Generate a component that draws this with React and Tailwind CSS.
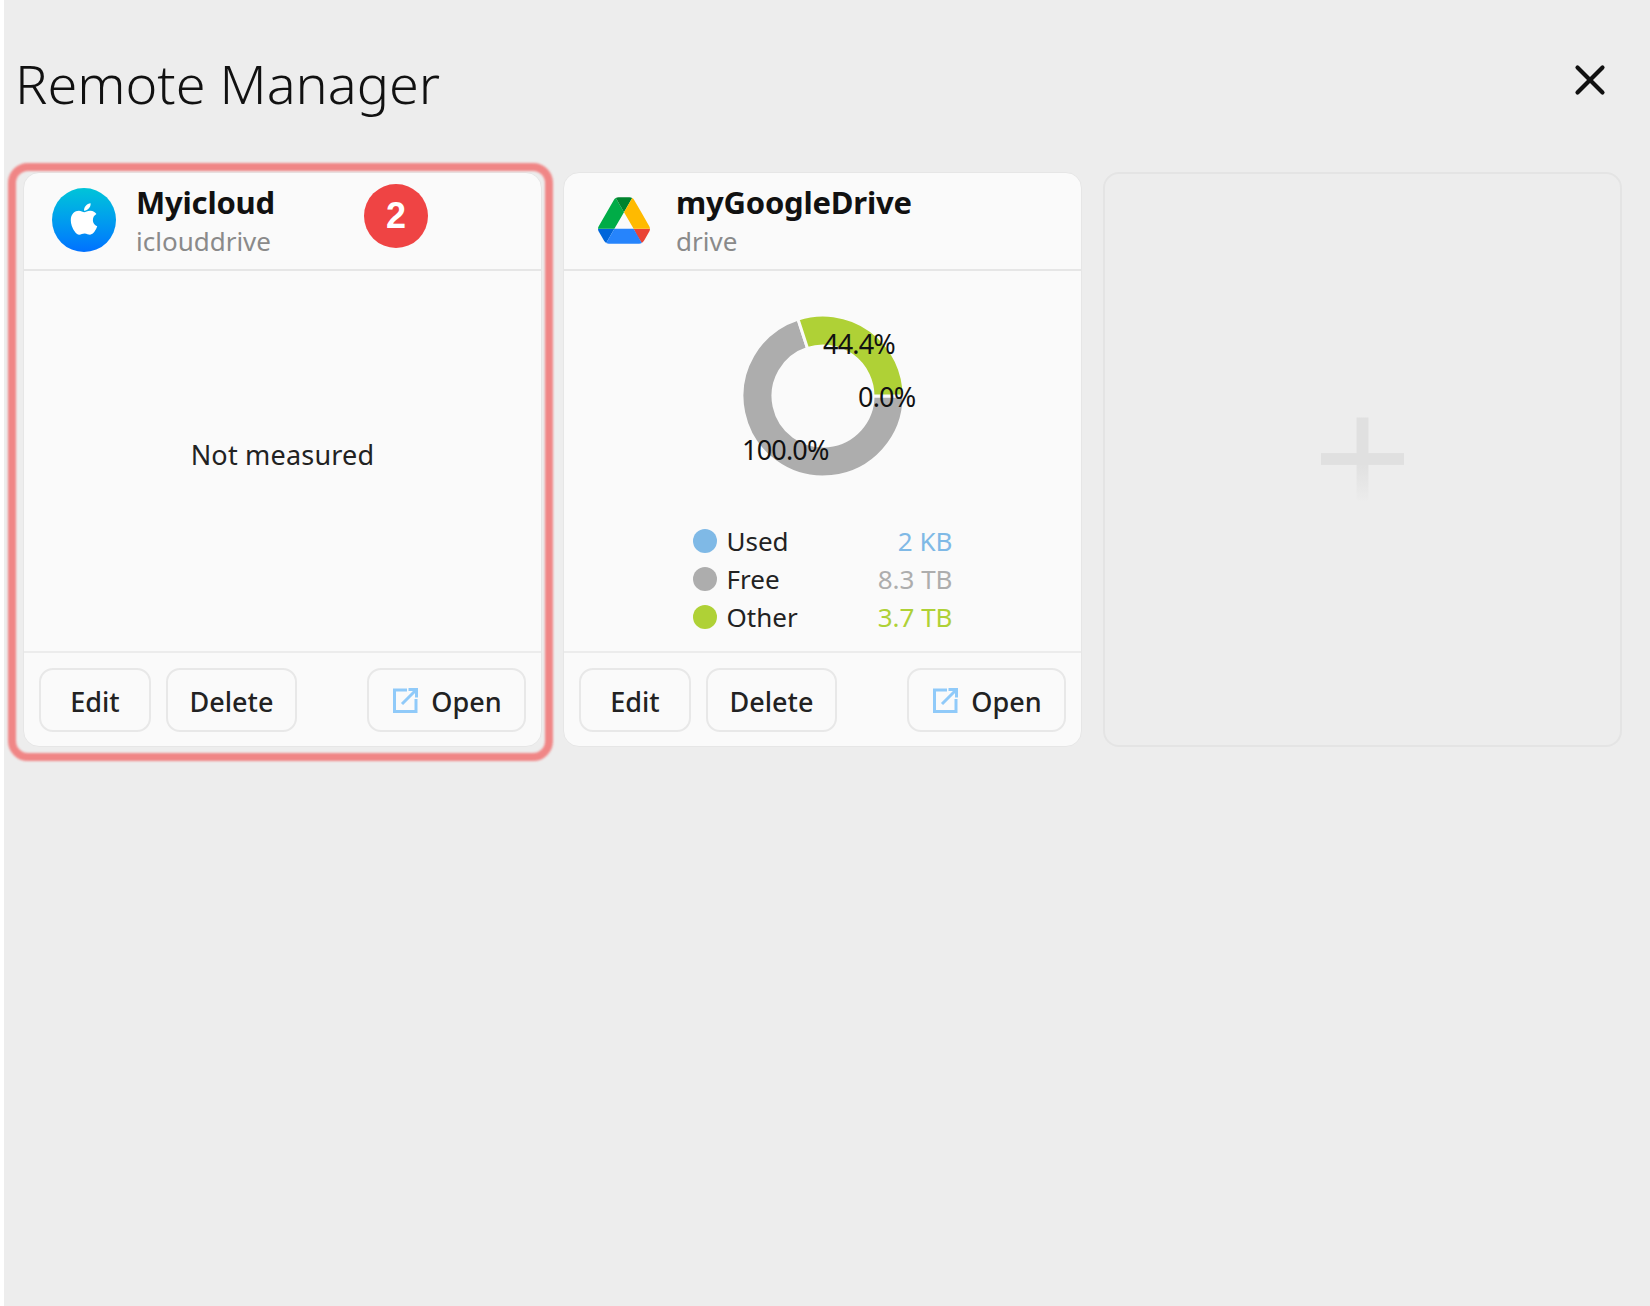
import React from "react";
import { FaApple } from "react-icons/fa";
import { X } from "lucide-react";

const font = "font-['Noto_Sans','Open_Sans',sans-serif]";

const DriveLogo = () => (
  <svg viewBox="0 0 87.3 78" className="w-[52px] h-[47px] ml-[6px]">
    <path d="m6.6 66.85 3.85 6.65c.8 1.4 1.95 2.5 3.3 3.3l13.75-23.8h-27.5c0 1.55.4 3.1 1.2 4.5z" fill="#0066da" />
    <path d="m43.65 25-13.75-23.8c-1.35.8-2.5 1.9-3.3 3.3l-25.4 44a9.06 9.06 0 0 0 -1.2 4.5h27.5z" fill="#00ac47" />
    <path d="m73.55 76.8c1.35-.8 2.5-1.9 3.3-3.3l1.6-2.75 7.65-13.25c.8-1.4 1.2-2.95 1.2-4.5h-27.502l5.852 11.5z" fill="#ea4335" />
    <path d="m43.65 25 13.75-23.8c-1.35-.8-2.9-1.2-4.5-1.2h-18.5c-1.6 0-3.15.45-4.5 1.2z" fill="#00832d" />
    <path d="m59.8 53h-32.3l-13.75 23.8c1.35.8 2.9 1.2 4.5 1.2h50.8c1.6 0 3.15-.45 4.5-1.2z" fill="#2684fc" />
    <path d="m73.4 26.5-12.7-22c-.8-1.4-1.95-2.5-3.3-3.3l-13.75 23.8 16.15 28h27.45c0-1.55-.4-3.1-1.2-4.5z" fill="#ffba00" />
  </svg>
);

const AppleLogo = () => (
  <div className="w-16 h-16 rounded-full bg-gradient-to-b from-[#00c4d8] to-[#0070ff] flex items-center justify-center">
    <FaApple className="text-white w-[36px] h-[36px] -mt-[3px]" />
  </div>
);

const OpenIcon = () => (
  <svg viewBox="0 0 25 25" className="w-[25px] h-[25px] mt-[2px]" fill="none" stroke="#90caf9" strokeWidth="3">
    <path d="M14 2H1.5v21.5H23V11" />
    <path d="M9 16L23 2M15.5 1.5h8v8" />
  </svg>
);

// donut: green from -18deg to 90deg, the rest grey
const Donut = () => {
  const arc = (a1, a2) => {
    const R = 81;
    const r = 50;
    const c = 90;
    const p = (rad, a) => {
      const t = ((a - 90) * Math.PI) / 180;
      return `${c + rad * Math.cos(t)} ${c + rad * Math.sin(t)}`;
    };
    const large = a2 - a1 > 180 ? 1 : 0;
    return `M${p(R, a1)} A${R} ${R} 0 ${large} 1 ${p(R, a2)} L${p(r, a2)} A${r} ${r} 0 ${large} 0 ${p(r, a1)} Z`;
  };
  const label = "fill-[#111] text-[27px] tracking-[-0.8px]";
  return (
    <svg viewBox="-20 0 220 180" className="w-[220px] h-[180px] overflow-visible">
      <path d={arc(90, 342)} fill="#adadad" stroke="#fafafa" strokeWidth="3" />
      <path d={arc(-18, 90)} fill="#afd136" stroke="#fafafa" strokeWidth="3" />
      <text x="90" y="48" className={label}>44.4%</text>
      <text x="125" y="101" className={label}>0.0%</text>
      <text x="9" y="154" className={label}>100.0%</text>
    </svg>
  );
};

const Legend = () => {
  const rows = [
    { name: "Used", value: "2 KB", dot: "bg-[#7fb9e6]", text: "text-[#7fb9e6]" },
    { name: "Free", value: "8.3 TB", dot: "bg-[#adadad]", text: "text-[#adadad]" },
    { name: "Other", value: "3.7 TB", dot: "bg-[#afd136]", text: "text-[#afd136]" },
  ];
  return (
    <div className="w-[260px] flex flex-col mt-[36px]">
      {rows.map((row) => (
        <div key={row.name} className="h-[38px] flex items-center text-[26px]">
          <div className={`w-6 h-6 rounded-full mr-[10px] ${row.dot}`}></div>
          <div className="text-[#222]">{row.name}</div>
          <div className={`ml-auto ${row.text}`}>{row.value}</div>
        </div>
      ))}
    </div>
  );
};

const Card = ({ icon, name, type, children }) => (
  <div className="h-[575px] rounded-[16px] border border-[#e6e6e6] bg-[#fafafa] flex flex-col">
    <div className="h-[98px] shrink-0 border-b-2 border-[#e6e6e6] flex items-center">
      <div className="w-[112px] pl-[28px] pb-[2px] shrink-0 flex justify-start">{icon}</div>
      <div className="flex flex-col">
        <div className="text-[31px] leading-[40px] font-bold text-[#111] tracking-[-0.2px]">{name}</div>
        <div className="text-[26px] leading-[38px] text-[#8a8a8a]">{type}</div>
      </div>
    </div>
    <div className="flex-1 flex flex-col items-center justify-start">{children}</div>
    <div className="h-[95px] shrink-0 border-t-2 border-[#ececec] flex items-center px-[15px] gap-[15px] text-[27px] font-medium text-[#222]">
      <div className="w-[112px] h-[64px] pt-[5px] rounded-[14px] border-2 border-[#e8e8e8] flex items-center justify-center">Edit</div>
      <div className="w-[131px] h-[64px] pt-[5px] rounded-[14px] border-2 border-[#e8e8e8] flex items-center justify-center">Delete</div>
      <div className="ml-auto w-[159px] h-[64px] pl-[2px] rounded-[14px] border-2 border-[#e8e8e8] flex items-center justify-center gap-[13px]">
        <OpenIcon />
        <span className="pt-[5px]">Open</span>
      </div>
    </div>
  </div>
);

export default function App() {
  return (
    <div className={`min-h-[1306px] bg-white pl-1 ${font}`}>
      <div className="min-h-[1306px] bg-[#ededed] pl-[19px] pr-[28px]">
        <div className="h-[172px] flex items-start justify-between">
          <div className="text-[54px] leading-[72px] mt-[47px] -ml-[8px] font-light text-[#111]">Remote Manager</div>
          <X className="mt-[55px] mr-[7px] w-[50px] h-[50px] text-[#111]" strokeWidth={2} />
        </div>
        <div className="grid grid-cols-3 gap-[21px]">
          <div className="relative">
            <Card icon={<AppleLogo />} name="Myicloud" type="iclouddrive">
              <div className="flex-1 flex items-center justify-center text-[27px] tracking-[0.2px] text-[#222] pb-[11px]">Not measured</div>
            </Card>
            <div className="absolute -top-[9px] -left-[15px] -right-[11px] -bottom-[14px] rounded-[20px] border-[8px] border-[#f08686] blur-[1px] pointer-events-none"></div>
            <div className="absolute top-[12px] left-[341px] w-16 h-16 rounded-full bg-[#ef4444] flex items-center justify-center text-white text-[36px] font-bold font-['Liberation_Sans',sans-serif]">2</div>
          </div>
          <Card icon={<DriveLogo />} name="myGoogleDrive" type="drive">
            <div className="mt-[35px]">
              <Donut />
            </div>
            <Legend />
          </Card>
          <div className="h-[575px] pb-[2px] rounded-[16px] border-2 border-[#e4e4e4] flex items-center justify-center">
            <svg viewBox="0 0 84 84" className="w-[83px] h-[84px]">
              <defs>
                <linearGradient id="plusFade" x1="0" y1="0" x2="0" y2="1">
                  <stop offset="0.55" stopColor="#e0e0e0" />
                  <stop offset="1" stopColor="#ececec" />
                </linearGradient>
              </defs>
              <rect x="36" y="0" width="12" height="84" fill="url(#plusFade)" />
              <rect x="0" y="36" width="84" height="12" fill="#e0e0e0" />
            </svg>
          </div>
        </div>
      </div>
    </div>
  );
}
